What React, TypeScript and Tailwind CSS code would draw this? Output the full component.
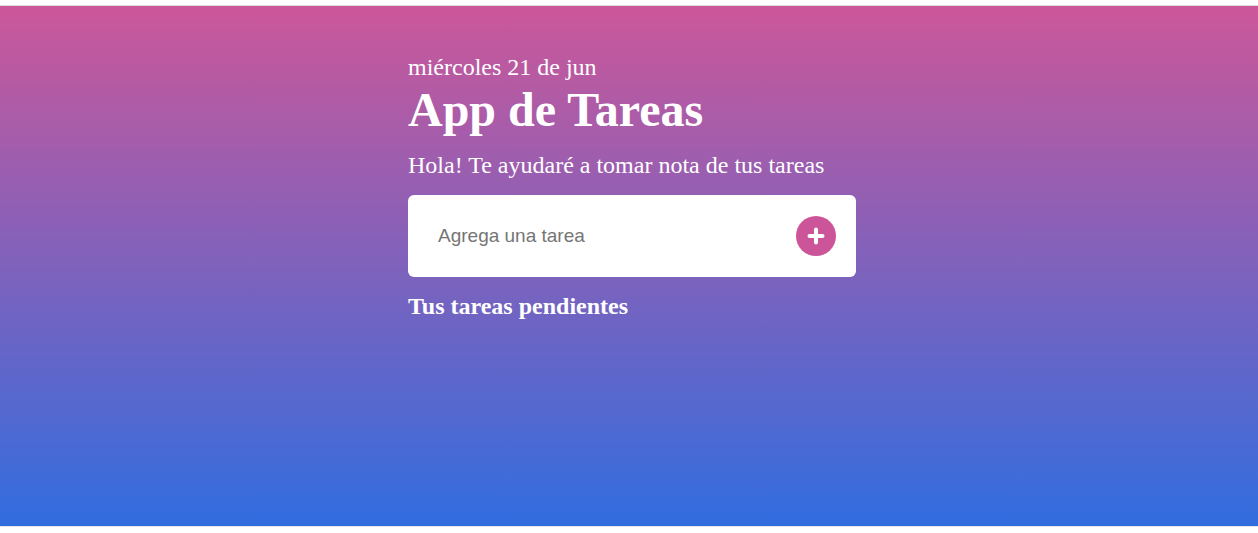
export default function App() {
  return (
    <div className="min-h-[533px] bg-white pt-[5px]" style={{ fontFamily: '"Liberation Serif", serif' }}>
      <div className="border-t border-[#dcdcdc]" />
      <main className="h-[520px] bg-[linear-gradient(to_bottom,#cc5799,#316ddf)] pl-[6px]">
        <div className="mx-auto w-[448px] pt-[46px] text-white">
          <p className="text-[24px] leading-[30px]">miércoles 21 de jun</p>
          <h1 className="mt-[2px] text-[48px] font-bold leading-[52px]">App de Tareas</h1>
          <p className="mt-[14px] text-[24px] leading-[30px]">Hola! Te ayudaré a tomar nota de tus tareas</p>
          <div className="mt-[15px] flex h-[82px] items-center justify-between rounded-[6px] bg-white pl-[30px] pr-[20px]">
            <input
              type="text"
              placeholder="Agrega una tarea"
              className="w-full bg-transparent text-[19px] text-[#333] outline-none placeholder:text-[#757575]"
              style={{ fontFamily: '"Liberation Sans", Arial, sans-serif' }}
            />
            <button className="flex h-[40px] w-[40px] shrink-0 items-center justify-center rounded-full bg-[#cc5599]">
              <svg width="20" height="20" viewBox="0 0 20 20">
                <path d="M10 3.5v13M3.5 10h13" stroke="white" strokeWidth="4" strokeLinecap="round" />
              </svg>
            </button>
          </div>
          <h3 className="mt-[14px] text-[24px] font-bold leading-[30px]">Tus tareas pendientes</h3>
        </div>
      </main>
      <div className="border-t border-[#e6e6e6]" />
    </div>
  );
}
